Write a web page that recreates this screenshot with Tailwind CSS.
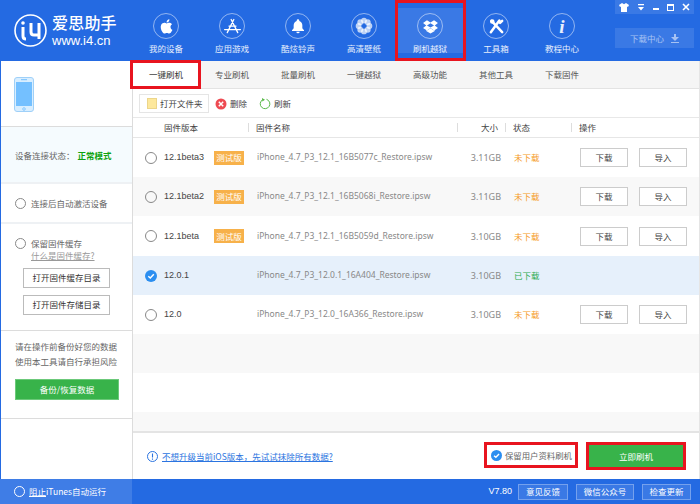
<!DOCTYPE html>
<html lang="zh">
<head>
  <meta charset="UTF-8" />
  <title>爱思助手</title>
  <script src="https://cdn.jsdelivr.net/npm/@tailwindcss/browser@4"></script>
</head>
<body class="bg-white">
  <div class="w-[700px] h-[504px] overflow-hidden flex flex-col text-[8.5px] leading-none text-[#555] font-['Noto_Sans_CJK_SC','Noto_Sans',sans-serif]">

    <!-- Header -->
    <header class="h-[61px] shrink-0 bg-[#246ae2] flex text-white relative">
      <div class="w-[133px] shrink-0 flex items-center pl-[14px] gap-[5px] pb-[1px]">
        <svg class="w-[33px] h-[33px]" viewBox="0 0 33 33" fill="none" stroke="white">
          <circle cx="16.5" cy="16.5" r="15.5" stroke-width="1.6" />
          <path d="M9 13v9c0 2 1 3 3 3M17 9v9c0 2 1 3 3 3h5M25 9v16" stroke-width="3" />
          <circle cx="9" cy="9" r="1.8" fill="white" stroke="none" />
        </svg>
        <div class="flex flex-col gap-[4px]">
          <span class="text-[16px] font-medium tracking-[0.2px]">爱思助手</span>
          <span class="text-[13px] font-['Liberation_Sans',sans-serif]">www.i4.cn</span>
        </div>
      </div>

      <nav class="flex text-white/90">
        <div class="w-[66px] flex flex-col items-center pt-[13px] gap-[5px]">
          <div class="w-[26px] h-[26px] rounded-full border border-white/50 flex items-center justify-center">
            <svg class="w-[17px] h-[17px]" viewBox="0 0 24 24" fill="white"><path d="M17.6 12.6c0-2.6 2.1-3.8 2.2-3.9-1.2-1.7-3-2-3.7-2-1.6-.2-3 .9-3.9.9-.8 0-2-.9-3.300-.9-1.700 0-3.300 1-4.200 2.500-1.800 3.100-.5 7.700 1.300 10.200.9 1.200 1.900 2.600 3.200 2.600 1.300-.1 1.800-.8 3.300-.8s2 .8 3.300.8c1.400 0 2.300-1.200 3.100-2.500 1-1.400 1.400-2.800 1.400-2.900-.1 0-2.700-1-2.700-4zM15.100 5c.7-.9 1.200-2 1-3.200-1 .1-2.200.7-2.900 1.500-.6.7-1.200 1.900-1 3.100 1.100.1 2.200-.6 2.900-1.400z"/></svg>
          </div>
          <span>我的设备</span>
        </div>
        <div class="w-[66px] flex flex-col items-center pt-[13px] gap-[5px]">
          <div class="w-[26px] h-[26px] rounded-full border border-white/50 flex items-center justify-center">
            <svg class="w-[21px] h-[21px]" viewBox="0 0 24 24" fill="none" stroke="white" stroke-width="1.500" stroke-linecap="round"><path d="M13.500 4 6 19M10.500 4 18 19M3 15.500h18M8 11.500h8" /></svg>
          </div>
          <span>应用游戏</span>
        </div>
        <div class="w-[66px] flex flex-col items-center pt-[13px] gap-[5px]">
          <div class="w-[26px] h-[26px] rounded-full border border-white/50 flex items-center justify-center">
            <svg class="w-[16px] h-[16px]" viewBox="0 0 24 24" fill="white"><path d="M12 2a2 2 0 0 0-2 2v.5C7 5.500 5.500 8 5.500 11v4.500L3 18.500v1h18v-1l-2.500-3V11c0-3-1.500-5.500-4.500-6.500V4a2 2 0 0 0-2-2zM9.500 20.500a2.500 2.500 0 0 0 5 0z"/></svg>
          </div>
          <span>酷炫铃声</span>
        </div>
        <div class="w-[66px] flex flex-col items-center pt-[13px] gap-[5px]">
          <div class="w-[26px] h-[26px] rounded-full border border-white/50 flex items-center justify-center">
            <svg class="w-[20px] h-[20px]" viewBox="0 0 24 24" fill="white" fill-opacity="0.7"><circle cx="12" cy="5.500" r="3.500"/><circle cx="12" cy="18.500" r="3.500"/><circle cx="5.500" cy="12" r="3.500"/><circle cx="18.500" cy="12" r="3.500"/><circle cx="7.500" cy="7.500" r="3.500"/><circle cx="16.500" cy="7.500" r="3.500"/><circle cx="7.500" cy="16.500" r="3.500"/><circle cx="16.500" cy="16.500" r="3.500"/></svg>
          </div>
          <span>高清壁纸</span>
        </div>
        <div class="w-[66px] flex flex-col items-center pt-[13px] gap-[5px] relative">
          <div class="absolute left-0 right-0 top-[8px] h-[45px] bg-white/10"></div>
          <div class="absolute left-[-2px] right-[-3px] top-0 h-[61px] border-[3px] border-[#e8141f]"></div>
          <div class="w-[26px] h-[26px] rounded-full border border-white/50 flex items-center justify-center relative">
            <svg class="w-[17px] h-[17px]" viewBox="0 0 24 24" fill="white"><path d="M7 3 1.500 7 6 10.500 1.500 14 7 17.500l5-3.500 5 3.500 5.500-3.500L18 10.500 22.500 7 17 3l-5 3.500zM12 7.500 17 10.500 12 13.500 7 10.500z"/><path d="M6 18.500 12 22l6-3.500V17l-1 .8-5-3.300-5 3.300-1-.8z"/></svg>
          </div>
          <span class="relative">刷机越狱</span>
        </div>
        <div class="w-[66px] flex flex-col items-center pt-[13px] gap-[5px]">
          <div class="w-[26px] h-[26px] rounded-full border border-white/50 flex items-center justify-center">
            <svg class="w-[17px] h-[17px]" viewBox="0 0 24 24" fill="none" stroke="white" stroke-linecap="round"><path d="M5 4l15 16" stroke-width="3.500"/><path d="M20 4l-3 3M16 3.500l-12 16.500" stroke-width="3.500"/><circle cx="6" cy="5" r="2" stroke-width="2.500"/></svg>
          </div>
          <span>工具箱</span>
        </div>
        <div class="w-[66px] flex flex-col items-center pt-[13px] gap-[5px]">
          <div class="w-[26px] h-[26px] rounded-full border border-white/50 flex items-center justify-center">
            <span class="text-[19px] font-bold italic font-['Liberation_Serif',serif]">i</span>
          </div>
          <span>教程中心</span>
        </div>
      </nav>

      <div class="absolute right-[6px] top-0 w-[79px] flex flex-col gap-[14px]">
        <div class="h-[14px] flex bg-white/10 items-center justify-around">
          <svg class="w-[10px] h-[9px]" viewBox="0 0 10 9" fill="white"><path d="M3 0 0 2l1 2 1-.5V9h6V3.500L9 4l1-2-3-2-2 1.200z"/></svg>
          <svg class="w-[8px] h-[7px]" viewBox="0 0 8 7" fill="white"><path d="M1 0h6v1.200H1zM1 3h6L4 6.500z"/></svg>
          <div class="w-[6px] h-[2px] bg-white mt-[4px]"></div>
          <div class="w-[7px] h-[7px] border border-white border-t-2"></div>
          <svg class="w-[8px] h-[8px]" viewBox="0 0 8 8" stroke="white" stroke-width="1.600"><path d="M1 1l6 6M7 1 1 7"/></svg>
        </div>
        <div class="h-[20px] bg-white/10 flex items-center justify-center gap-[7px] text-white/55">
          <span>下载中心</span>
          <svg class="w-[8px] h-[9px]" viewBox="0 0 8 9" fill="white" fill-opacity="0.55"><path d="M3 0h2v3h3L4 7 0 3h3zM0 8h8v1H0z"/></svg>
        </div>
      </div>
    </header>

    <div class="flex-1 flex min-h-0 border-l border-l-[#246ae2] border-r border-r-[#e5e5e5]">
      <!-- Sidebar -->
      <aside class="w-[132px] shrink-0 border-r border-[#dcdcdc] flex flex-col">
        <div class="h-[66px] shrink-0 border-b border-[#dcdcdc] pl-[13px] pt-[16px]">
          <svg class="w-[20px] h-[35px]" viewBox="0 0 20 35">
            <rect x="0.500" y="0.500" width="19" height="34" rx="2.500" fill="#d8eeff" stroke="#9fd0f8" />
            <rect x="2" y="5" width="16" height="24" fill="#74c0ff" />
            <circle cx="10" cy="32" r="1.300" fill="none" stroke="#74c0ff" stroke-width="0.800" />
            <path d="M7 2.700h6" stroke="#74c0ff" />
          </svg>
        </div>
        <div class="h-[55px] shrink-0 bg-[#f5fbfe] flex items-center pl-[14px] gap-[3px] pt-[2px]">
          <span class="text-[#666]">设备连接状态：</span>
          <span class="text-[#0fa30f] font-bold">正常模式</span>
        </div>
        <div class="h-[42px] shrink-0 border-y-2 border-[#eef1f4] flex items-center pl-[14px] gap-[5px]">
          <span class="w-[11px] h-[11px] rounded-full border border-[#888]"></span>
          <span class="text-[#666]">连接后自动激活设备</span>
        </div>
        <div class="h-[107px] shrink-0 border-b border-[#dcdcdc] pl-[14px] pt-[14px] flex flex-col">
          <div class="flex items-center gap-[5px]">
            <span class="w-[11px] h-[11px] rounded-full border border-[#888]"></span>
            <span class="text-[#666]">保留固件缓存</span>
          </div>
          <span class="ml-[16px] mt-[2px] underline text-[#999]">什么是固件缓存?</span>
          <div class="ml-[8px] mt-[8px] w-[87px] h-[20px] border border-[#bbb] flex items-center justify-center text-[#333]">打开固件缓存目录</div>
          <div class="ml-[8px] mt-[7px] w-[87px] h-[20px] border border-[#bbb] flex items-center justify-center text-[#333]">打开固件存储目录</div>
        </div>
        <div class="h-[88px] shrink-0 border-b border-[#dcdcdc] pl-[14px] pt-[11px]">
          <p class="text-[#666]">请在操作前备份好您的数据</p>
          <p class="text-[#666] mt-[6px]">使用本工具请自行承担风险</p>
          <div class="mt-[14px] w-[104px] h-[21px] bg-[#38b34a] border border-[#6cc97a] text-white flex items-center justify-center">备份/恢复数据</div>
        </div>
      </aside>

      <!-- Main -->
      <main class="flex-1 min-w-0 flex flex-col">
        <div class="h-[28px] shrink-0 bg-[#f5f5f5] border-b border-[#e3e3e3] flex relative">
          <div class="w-[66px] flex items-center justify-center bg-white text-[#333] relative">
            一键刷机
            <div class="absolute left-[-3px] right-[-2px] top-[-1px] bottom-[-1px] border-[3px] border-[#e8141f]"></div>
          </div>
          <div class="w-[66px] flex items-center justify-center">专业刷机</div>
          <div class="w-[66px] flex items-center justify-center">批量刷机</div>
          <div class="w-[66px] flex items-center justify-center">一键越狱</div>
          <div class="w-[66px] flex items-center justify-center">高级功能</div>
          <div class="w-[66px] flex items-center justify-center">其他工具</div>
          <div class="w-[66px] flex items-center justify-center">下载固件</div>
        </div>

        <div class="h-[29px] shrink-0 border-b border-[#e8e8e8] flex items-center pl-[6px] pt-[1px]">
          <div class="w-[70px] h-[19px] border border-[#e5e5e5] flex items-center pl-[7px] gap-[3px] text-[#444]">
            <span class="w-[10px] h-[11px] bg-[#fde89c] border border-[#ecd58a]"></span>打开文件夹
          </div>
          <svg class="w-[12px] h-[12px] ml-[6px]" viewBox="0 0 12 12"><circle cx="6" cy="6" r="5.500" fill="#ee4a52"/><path d="M3.800 3.800l4.400 4.400M8.200 3.800 3.800 8.200" stroke="white" stroke-width="1.500"/></svg>
          <span class="ml-[3px] text-[#444]">删除</span>
          <svg class="w-[12px] h-[12px] ml-[12px]" viewBox="0 0 12 12" fill="none"><path d="M7.500 1.300A4.800 4.800 0 1 1 3.500 1.800" stroke="#58b947" stroke-width="1"/><path d="M3 0 6 1.800 3.300 3.600z" fill="#58b947"/></svg>
          <span class="ml-[3px] text-[#444]">刷新</span>
        </div>

        <div class="h-[20px] shrink-0 border-b border-[#e6e6e6] flex items-center text-[#444]">
          <span class="w-[116px] pl-[31px] border-r border-[#ddd]">固件版本</span>
          <span class="w-[209px] pl-[7px] border-r border-[#ddd]">固件名称</span>
          <span class="w-[48px] pr-[7px] text-right border-r border-[#ddd]">大小</span>
          <span class="w-[66px] pl-[7px] border-r border-[#ddd]">状态</span>
          <span class="pl-[7px]">操作</span>
        </div>

        <div class="flex-1 min-h-0 flex flex-col">
          <div class="h-[39px] flex items-center relative">
            <span class="ml-[12px] w-[12px] h-[12px] rounded-full border border-[#888]"></span>
            <span class="ml-[7px] w-[50px] text-[9px] text-[#444] font-['Liberation_Sans',sans-serif]">12.1beta3</span>
            <span class="w-[30px] h-[14px] bg-[#f7b14a] text-white flex items-center justify-center">测试版</span>
            <span class="ml-[13px] w-[202px] text-[8.5px] text-[#888] font-['Noto_Sans',sans-serif]">iPhone_4.7_P3_12.1_16B5077c_Restore.ipsw</span>
            <span class="w-[42px] text-right text-[9px] text-[#888] font-['Noto_Sans',sans-serif]">3.11GB</span>
            <span class="ml-[13px] w-[66px] text-[#f59a23]">未下载</span>
            <span class="w-[48px] h-[19px] border border-[#ccc] flex items-center justify-center text-[#444]">下载</span>
            <span class="ml-[11px] w-[48px] h-[19px] border border-[#ccc] flex items-center justify-center text-[#444]">导入</span>
          </div>
          <div class="h-[39px] bg-[#f8f8f8] flex items-center">
            <span class="ml-[12px] w-[12px] h-[12px] rounded-full border border-[#888]"></span>
            <span class="ml-[7px] w-[50px] text-[9px] text-[#444] font-['Liberation_Sans',sans-serif]">12.1beta2</span>
            <span class="w-[30px] h-[14px] bg-[#f7b14a] text-white flex items-center justify-center">测试版</span>
            <span class="ml-[13px] w-[202px] text-[8.5px] text-[#888] font-['Noto_Sans',sans-serif]">iPhone_4.7_P3_12.1_16B5068i_Restore.ipsw</span>
            <span class="w-[42px] text-right text-[9px] text-[#888] font-['Noto_Sans',sans-serif]">3.11GB</span>
            <span class="ml-[13px] w-[66px] text-[#f59a23]">未下载</span>
            <span class="w-[48px] h-[19px] bg-white border border-[#ccc] flex items-center justify-center text-[#444]">下载</span>
            <span class="ml-[11px] w-[48px] h-[19px] bg-white border border-[#ccc] flex items-center justify-center text-[#444]">导入</span>
          </div>
          <div class="h-[40px] flex items-center">
            <span class="ml-[12px] w-[12px] h-[12px] rounded-full border border-[#888]"></span>
            <span class="ml-[7px] w-[50px] text-[9px] text-[#444] font-['Liberation_Sans',sans-serif]">12.1beta</span>
            <span class="w-[30px] h-[14px] bg-[#f7b14a] text-white flex items-center justify-center">测试版</span>
            <span class="ml-[13px] w-[202px] text-[8.5px] text-[#888] font-['Noto_Sans',sans-serif]">iPhone_4.7_P3_12.1_16B5059d_Restore.ipsw</span>
            <span class="w-[42px] text-right text-[9px] text-[#888] font-['Noto_Sans',sans-serif]">3.10GB</span>
            <span class="ml-[13px] w-[66px] text-[#f59a23]">未下载</span>
            <span class="w-[48px] h-[19px] border border-[#ccc] flex items-center justify-center text-[#444]">下载</span>
            <span class="ml-[11px] w-[48px] h-[19px] border border-[#ccc] flex items-center justify-center text-[#444]">导入</span>
          </div>
          <div class="h-[39px] bg-[#e6f0fb] flex items-center">
            <svg class="ml-[12px] w-[12px] h-[12px]" viewBox="0 0 12 12"><circle cx="6" cy="6" r="6" fill="#2b8ef0"/><path d="M3.300 6.200 5.300 8 8.800 4.300" fill="none" stroke="white" stroke-width="1.500"/></svg>
            <span class="ml-[7px] w-[80px] text-[9px] text-[#444] font-['Liberation_Sans',sans-serif]">12.0.1</span>
            <span class="ml-[13px] w-[202px] text-[8.5px] text-[#888] font-['Noto_Sans',sans-serif]">iPhone_4.7_P3_12.0.1_16A404_Restore.ipsw</span>
            <span class="w-[42px] text-right text-[9px] text-[#888] font-['Noto_Sans',sans-serif]">3.10GB</span>
            <span class="ml-[13px] text-[#2cab4f]">已下载</span>
          </div>
          <div class="h-[39px] flex items-center">
            <span class="ml-[12px] w-[12px] h-[12px] rounded-full border border-[#888]"></span>
            <span class="ml-[7px] w-[80px] text-[9px] text-[#444] font-['Liberation_Sans',sans-serif]">12.0</span>
            <span class="ml-[13px] w-[202px] text-[8.5px] text-[#888] font-['Noto_Sans',sans-serif]">iPhone_4.7_P3_12.0_16A366_Restore.ipsw</span>
            <span class="w-[42px] text-right text-[9px] text-[#888] font-['Noto_Sans',sans-serif]">3.10GB</span>
            <span class="ml-[13px] w-[66px] text-[#f59a23]">未下载</span>
            <span class="w-[48px] h-[19px] border border-[#ccc] flex items-center justify-center text-[#444]">下载</span>
            <span class="ml-[11px] w-[48px] h-[19px] border border-[#ccc] flex items-center justify-center text-[#444]">导入</span>
          </div>
          <div class="h-[39px] bg-[#f8f8f8]"></div>
          <div class="h-[39px]"></div>
          <div class="flex-1 bg-[#f8f8f8]"></div>
        </div>

        <div class="h-[48px] shrink-0 border-t-2 border-[#e4e4e4] flex items-center pl-[14px] relative">
          <svg class="w-[11px] h-[11px]" viewBox="0 0 11 11" fill="none"><circle cx="5.500" cy="5.500" r="5" stroke="#2b74e0"/><path d="M5.500 2.500v4M5.500 7.500v1.200" stroke="#2b74e0" stroke-width="1.100"/></svg>
          <span class="ml-[4px] text-[#2b74e0] underline">不想升级当前iOS版本，先试试抹除所有数据?</span>
          <div class="absolute left-[351px] top-[9px] w-[94px] h-[26px] border-[3px] border-[#e8141f] flex items-center pl-[4px] gap-[3px] text-[8.4px] text-[#666]">
            <svg class="w-[11px] h-[11px]" viewBox="0 0 12 12"><circle cx="6" cy="6" r="6" fill="#2b8ef0"/><path d="M3.300 6.200 5.300 8 8.800 4.300" fill="none" stroke="white" stroke-width="1.500"/></svg>
            保留用户资料刷机
          </div>
          <div class="absolute left-[453px] top-[9px] w-[100px] h-[28px] border-[3px] border-[#e8141f] bg-[#38b34a] text-white flex items-center justify-center">立即刷机</div>
        </div>
      </main>
    </div>

    <!-- Bottom bar -->
    <footer class="h-[25px] shrink-0 bg-[#246ae2] flex items-center text-white">
      <div class="w-[132px] h-full bg-[#3f7de6] flex items-center pl-[14px] gap-[4px]">
        <span class="w-[11px] h-[11px] rounded-full border border-white"></span>
        <span><span class="underline">阻止</span>iTunes自动运行</span>
      </div>
      <div class="flex-1 flex items-center justify-end pr-[9px]">
        <span class="mr-[6px] text-[9px] font-['Liberation_Sans',sans-serif]">V7.80</span>
        <span class="w-[50px] h-[16px] border border-white/30 bg-white/10 flex items-center justify-center">意见反馈</span>
        <span class="ml-[8px] w-[58px] h-[16px] border border-white/30 bg-white/10 flex items-center justify-center">微信公众号</span>
        <span class="ml-[8px] w-[49px] h-[16px] border border-white/30 bg-white/10 flex items-center justify-center">检查更新</span>
      </div>
    </footer>
  </div>
</body>
</html>
